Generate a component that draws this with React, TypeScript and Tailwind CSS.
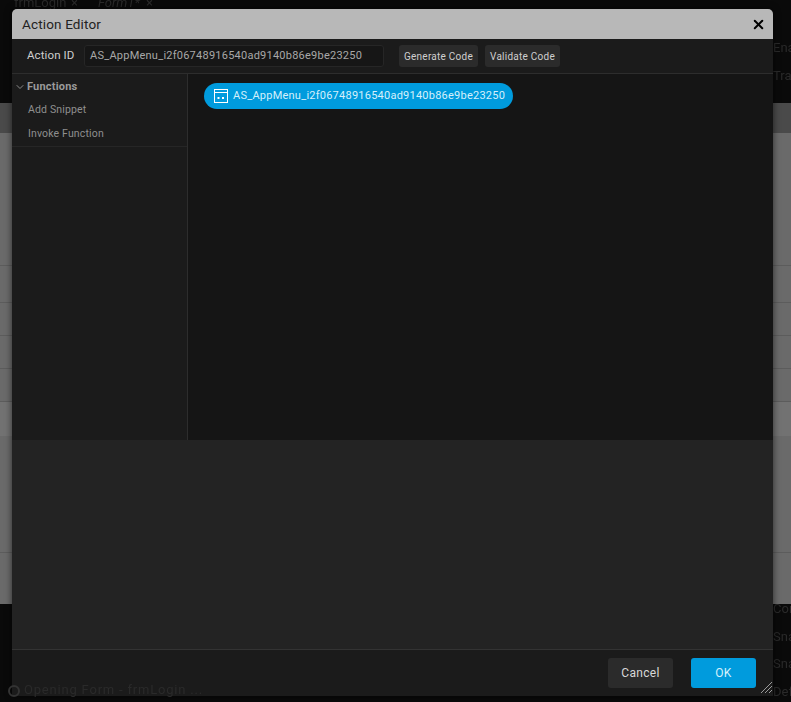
import { X, ChevronDown } from 'lucide-react'

const font = 'font-["Roboto","Liberation_Sans",sans-serif]'

function BackgroundRow({ h, border = true }: { h: string; border?: boolean }) {
  return <div className={`${h} shrink-0 ${border ? 'border-b border-[#5c5c5c]' : ''}`} />
}

function Backdrop() {
  return (
    <div className="h-[702px] w-[791px] flex flex-col bg-[#0a0a0a] text-[#2a2a2a] text-[13px] overflow-hidden">
      <div className="h-[103px] shrink-0 flex justify-between">
        <div className="flex pl-[14px] mt-[-7px] h-[16px] blur-[0.5px]">
          <span className="w-[57px]">frmLogin</span>
          <span className="w-[27px]">×</span>
          <span className="w-[48px] italic">Form1*</span>
          <span>×</span>
        </div>
        <div className="w-[18px] flex flex-col gap-[8px] pt-[38px] blur-[0.5px] overflow-hidden whitespace-nowrap">
          <span>Enabled</span>
          <span>Transform</span>
        </div>
      </div>
      <div className="h-[501px] shrink-0 flex flex-col bg-[#6a6a6a]">
        <div className="h-[30px] shrink-0 bg-[#4a4a4a]" />
        <BackgroundRow h="h-[133px]" />
        <BackgroundRow h="h-[37px]" />
        <BackgroundRow h="h-[33px]" />
        <BackgroundRow h="h-[33px]" />
        <BackgroundRow h="h-[33px]" />
        <div className="h-[34px] shrink-0 bg-[#727272]" />
        <BackgroundRow h="h-[117px]" />
      </div>
      <div className="flex-1 flex justify-between">
        <div className="relative z-10 w-[200px] flex items-end gap-[4px] pl-[8px] pb-[3px] tracking-[0.8px] blur-[0.5px] whitespace-nowrap">
          <span className="shrink-0 mb-[2px] size-[12px] rounded-full border-2 border-[#333]" />
          <span>Opening Form - frmLogin ...</span>
        </div>
        <div className="w-[18px] flex flex-col gap-[8px] mt-[-5px] blur-[0.5px] overflow-hidden whitespace-nowrap">
          <span>Conf</span>
          <span>Snap</span>
          <span>Snap</span>
          <span>Default</span>
        </div>
      </div>
    </div>
  )
}

function WindowIcon() {
  return (
    <svg width="14" height="14" viewBox="0 0 14 14" fill="none" stroke="white" strokeWidth="1" className="shrink-0">
      <rect x="0.5" y="0.5" width="13" height="13" />
      <path d="M0.5 3.5H13.5" />
      <rect x="3.5" y="8" width="2" height="2" fill="white" stroke="none" />
      <rect x="8" y="8" width="2" height="2" fill="white" stroke="none" />
    </svg>
  )
}

function ActionEditor() {
  return (
    <div className="absolute left-[12px] top-[9px] w-[761px] h-[687px] flex flex-col rounded-t-[5px] overflow-hidden bg-[#1b1b1b] shadow-[0_0_7px_rgba(0,0,0,0.6)]">
      <div className="h-[30px] shrink-0 flex items-center justify-between pl-[10px] pr-[7px] bg-[#b8b8b8]">
        <span className="text-[13.5px] tracking-[0.15px] text-[#222]">Action Editor</span>
        <X size={15} strokeWidth={3.2} className="text-black" />
      </div>

      <div className="h-[35px] shrink-0 flex items-center pl-[15px] border-b border-[#2d2d2d]">
        <span className="text-[11.5px] tracking-[0.1px] text-[#cfcfcf] w-[57px]">Action ID</span>
        <div className="w-[300px] h-[22px] flex items-center px-[5px] rounded-[3px] bg-[#161616] border border-[#262626] text-[11px] tracking-[0.24px] text-[#a8a8a8]">
          AS_AppMenu_i2f06748916540ad9140b86e9be23250
        </div>
        <button className="ml-[15px] h-[22px] w-[79px] rounded-[3px] bg-[#2b2b2b] text-[10px] tracking-[0.25px] text-[#cfcfcf]">Generate Code</button>
        <button className="ml-[7px] h-[22px] w-[75px] rounded-[3px] bg-[#2b2b2b] text-[10px] tracking-[0.25px] text-[#cfcfcf]">Validate Code</button>
      </div>

      <div className="h-[366px] shrink-0 flex">
        <div className="w-[176px] shrink-0 border-r border-[#2d2d2d]">
          <div className="border-b border-[#262626] h-[73px]">
            <div className="h-[24px] flex items-center pt-[2px] pl-[2px] gap-[1px] text-[11px] font-bold tracking-[0.2px] text-[#9a9a9a]">
              <ChevronDown size={12} className="text-[#8a8a8a]" />
              Functions
            </div>
            <div className="h-[24px] flex items-center pl-[16px] text-[10.5px] tracking-[0.15px] text-[#8f8f8f]">Add Snippet</div>
            <div className="h-[24px] flex items-center pl-[16px] text-[10.5px] tracking-[0.15px] text-[#8f8f8f]">Invoke Function</div>
          </div>
        </div>
        <div className="flex-1 bg-[#151515] pt-[9px] pl-[16px]">
          <div className="inline-flex items-center gap-[5px] h-[26px] pl-[10px] pr-[8px] rounded-full bg-[#009bdd] text-[11px] tracking-[0.24px] text-[#d5f0fb]">
            <WindowIcon />
            AS_AppMenu_i2f06748916540ad9140b86e9be23250
          </div>
        </div>
      </div>

      <div className="flex-1 bg-[#232323]" />

      <div className="relative h-[47px] shrink-0 flex items-center justify-end gap-[18px] pr-[17px] border-t border-[#333]">
        <button className="h-[30px] w-[65px] rounded-[3px] bg-[#2b2b2b] text-[12px] tracking-[0.3px] text-[#d8d8d8]">Cancel</button>
        <button className="h-[30px] w-[65px] rounded-[3px] bg-[#009bdd] text-[12px] tracking-[0.3px] text-[#d5f0fb]">OK</button>
        <svg width="12" height="12" viewBox="0 0 12 12" stroke="#9a9a9a" strokeWidth="1" className="absolute right-[1px] bottom-[3px]">
          <path d="M1 12L12 1M5 12L12 5M9 12L12 9" />
        </svg>
      </div>
    </div>
  )
}

export default function App() {
  return (
    <div className={`relative w-[791px] h-[702px] overflow-hidden ${font}`}>
      <Backdrop />
      <ActionEditor />
    </div>
  )
}
